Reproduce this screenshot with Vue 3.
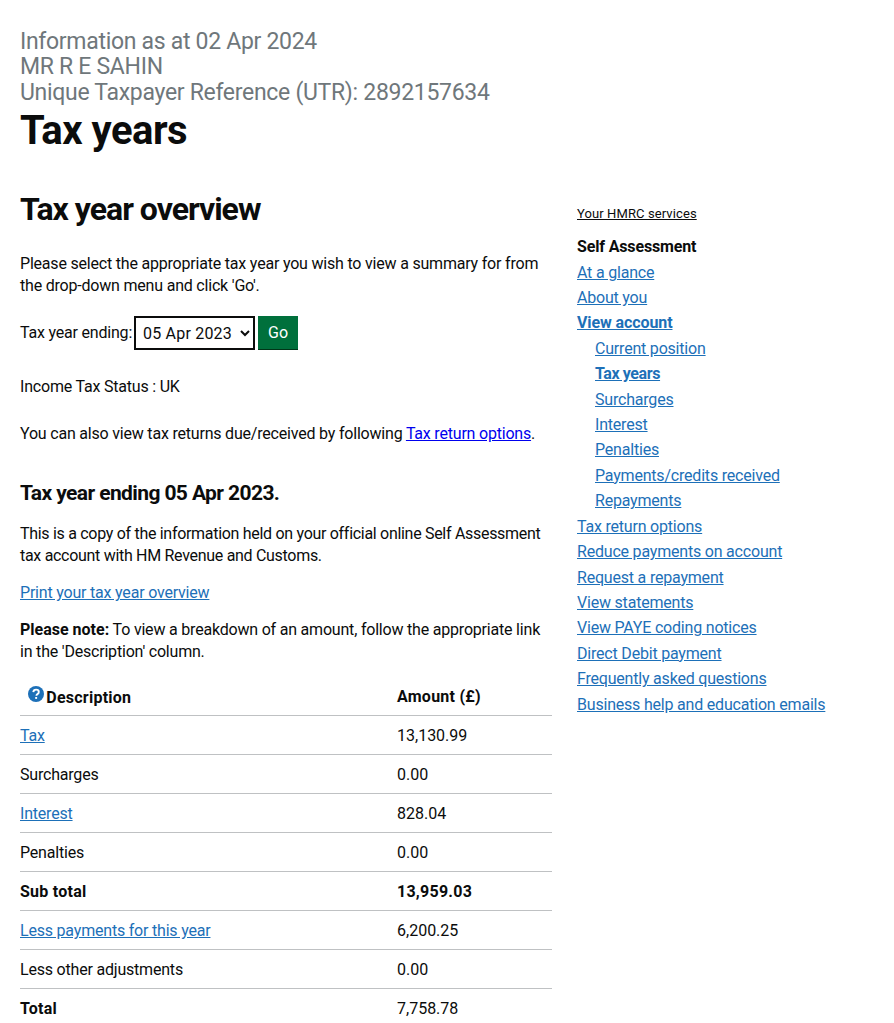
<template>
  <div class="page">
    <header class="top">
      <div class="info">
        <div>Information as at 02 Apr 2024</div>
        <div>MR R E SAHIN</div>
        <div>Unique Taxpayer Reference (UTR): 2892157634</div>
      </div>
      <h1>Tax years</h1>
    </header>

    <div class="columns">
      <main class="content">
        <h2>Tax year overview</h2>
        <p class="intro">Please select the appropriate tax year you wish to view a summary for from the drop-down menu and click 'Go'.</p>

        <form class="year-form" @submit.prevent>
          <label for="year">Tax year ending:</label>
          <select id="year" v-model="year">
            <option>05 Apr 2023</option>
            <option>05 Apr 2022</option>
          </select>
          <button type="submit">Go</button>
        </form>

        <p class="status">Income Tax Status : UK</p>
        <p class="returns">You can also view tax returns due/received by following <a class="plain" href="#">Tax return options</a>.</p>

        <h3>Tax year ending 05 Apr 2023.</h3>
        <p class="copy">This is a copy of the information held on your official online Self Assessment tax account with HM Revenue and Customs.</p>
        <p class="print"><a href="#">Print your tax year overview</a></p>
        <p class="note"><strong>Please note:</strong> To view a breakdown of an amount, follow the appropriate link in the 'Description' column.</p>

        <table>
          <thead>
            <tr>
              <th class="desc-head">
                <svg class="help" viewBox="0 0 16 16" aria-hidden="true">
                  <circle cx="8" cy="8" r="8" fill="#1d70b8" />
                  <path d="M5.3 6.1C5.4 4.6 6.5 3.6 8.1 3.6c1.6 0 2.7 1 2.7 2.3 0 1-.5 1.6-1.4 2.2-.7.4-.9.7-.9 1.3v.3" fill="none" stroke="#fff" stroke-width="1.9" />
                  <rect x="7.2" y="11" width="1.9" height="1.9" fill="#fff" />
                </svg>
                Description
              </th>
              <th>Amount (£)</th>
            </tr>
          </thead>
          <tbody>
            <tr v-for="row in rows" :key="row.label" :class="{ bold: row.bold }">
              <td><a v-if="row.link" href="#">{{ row.label }}</a><template v-else>{{ row.label }}</template></td>
              <td class="amount" :class="{ 'plain-amount': row.plainAmount }">{{ row.amount }}</td>
            </tr>
          </tbody>
        </table>
      </main>

      <aside class="side">
        <a class="services" href="#">Your HMRC services</a>
        <div class="side-title">Self Assessment</div>
        <ul>
          <li v-for="item in nav" :key="item.label" :class="{ sub: item.sub }">
            <a href="#" :class="{ current: item.current }">{{ item.label }}</a>
          </li>
        </ul>
      </aside>
    </div>
  </div>
</template>

<script setup>
import { ref } from 'vue'

const year = ref('05 Apr 2023')

const rows = [
  { label: 'Tax', amount: '13,130.99', link: true },
  { label: 'Surcharges', amount: '0.00' },
  { label: 'Interest', amount: '828.04', link: true },
  { label: 'Penalties', amount: '0.00' },
  { label: 'Sub total', amount: '13,959.03', bold: true },
  { label: 'Less payments for this year', amount: '6,200.25', link: true },
  { label: 'Less other adjustments', amount: '0.00' },
  { label: 'Total', amount: '7,758.78', bold: true, plainAmount: true },
]

const nav = [
  { label: 'At a glance' },
  { label: 'About you' },
  { label: 'View account', current: true },
  { label: 'Current position', sub: true },
  { label: 'Tax years', sub: true, current: true },
  { label: 'Surcharges', sub: true },
  { label: 'Interest', sub: true },
  { label: 'Penalties', sub: true },
  { label: 'Payments/credits received', sub: true },
  { label: 'Repayments', sub: true },
  { label: 'Tax return options' },
  { label: 'Reduce payments on account' },
  { label: 'Request a repayment' },
  { label: 'View statements' },
  { label: 'View PAYE coding notices' },
  { label: 'Direct Debit payment' },
  { label: 'Frequently asked questions' },
  { label: 'Business help and education emails' },
]
</script>

<style>
html, body {
  background: #fff;
}
</style>

<style scoped>
.page {
  height: 1023px;
  overflow: hidden;
  padding: 29px 20px 0;
  box-sizing: border-box;
  font-family: Roboto, "Liberation Sans", sans-serif;
  font-size: 16px;
  line-height: 22px;
  letter-spacing: -0.2px;
  color: #0b0c0c;
}

.info {
  font-size: 23px;
  line-height: 25.4px;
  letter-spacing: -0.3px;
  color: #6f777b;
}

h1 {
  margin: 0;
  font-size: 40px;
  line-height: 51px;
  font-weight: 700;
  letter-spacing: -0.5px;
}

.columns {
  display: flex;
  margin-top: 33px;
}

.content {
  width: 532px;
  flex: none;
}

h2 {
  margin: 0 0 24px;
  font-size: 32px;
  line-height: 40px;
  font-weight: 700;
  letter-spacing: -1px;
}

h3 {
  margin: 35px 0 17px;
  font-size: 21px;
  line-height: 26px;
  font-weight: 700;
  letter-spacing: -0.6px;
}

p {
  margin: 0;
}

.intro {
  margin-bottom: 19px;
}

.year-form {
  display: flex;
  align-items: center;
  gap: 2px;
  height: 34px;
}

select {
  width: 121px;
  height: 34px;
  margin: 0;
  padding: 0 3px;
  border: 2px solid #0b0c0c;
  border-radius: 0;
  background: #fff;
  color: #0b0c0c;
  font-family: inherit;
  font-size: 16px;
  letter-spacing: 0.2px;
}

button {
  width: 40px;
  height: 34px;
  margin-left: 1px;
  padding: 0;
  border: 0;
  border-bottom: 1px solid #003618;
  background: #00703c;
  color: #fff;
  font-family: inherit;
  font-size: 16px;
}

.status {
  margin-top: 26px;
}

.returns {
  margin-top: 25px;
}

.copy {
  letter-spacing: -0.3px;
}

.copy,
.print {
  margin-bottom: 15px;
}

.note {
  margin-bottom: 14px;
}

strong {
  letter-spacing: 0;
}

a {
  color: #1d70b8;
  text-decoration: underline;
}

a.plain {
  color: #0000ee;
}

table {
  width: 100%;
  border-collapse: collapse;
  table-layout: fixed;
}

th, td {
  height: 36px;
  padding: 2px 0 0;
  border-bottom: 1px solid #bfc1c3;
  text-align: left;
  vertical-align: middle;
}

th {
  font-weight: 700;
  letter-spacing: 0.25px;
}

th:first-child, td:first-child {
  width: 377px;
}

.desc-head {
  white-space: nowrap;
}

.help {
  width: 16px;
  height: 16px;
  margin-left: 8px;
  margin-right: -2px;
  vertical-align: 1px;
}

td.amount {
  letter-spacing: 0;
}

tr.bold td {
  font-weight: 700;
  letter-spacing: 0.25px;
}

tr.bold td.plain-amount {
  font-weight: 400;
  letter-spacing: 0;
}

tbody tr:last-child td {
  border-bottom: 0;
}

.side {
  margin-left: 25px;
  margin-top: 15px;
  line-height: 25.4px;
}

.services {
  display: block;
  font-size: 13px;
  line-height: 20px;
  letter-spacing: 0.1px;
  color: #0b0c0c;
}

.side-title {
  margin-top: 10px;
  font-weight: 700;
  letter-spacing: -0.15px;
}

ul {
  margin: 0;
  padding: 0;
  list-style: none;
}

li.sub {
  padding-left: 18px;
}

a.current {
  font-weight: 700;
  letter-spacing: -0.1px;
}

li.sub a.current {
  letter-spacing: -0.4px;
}
</style>
